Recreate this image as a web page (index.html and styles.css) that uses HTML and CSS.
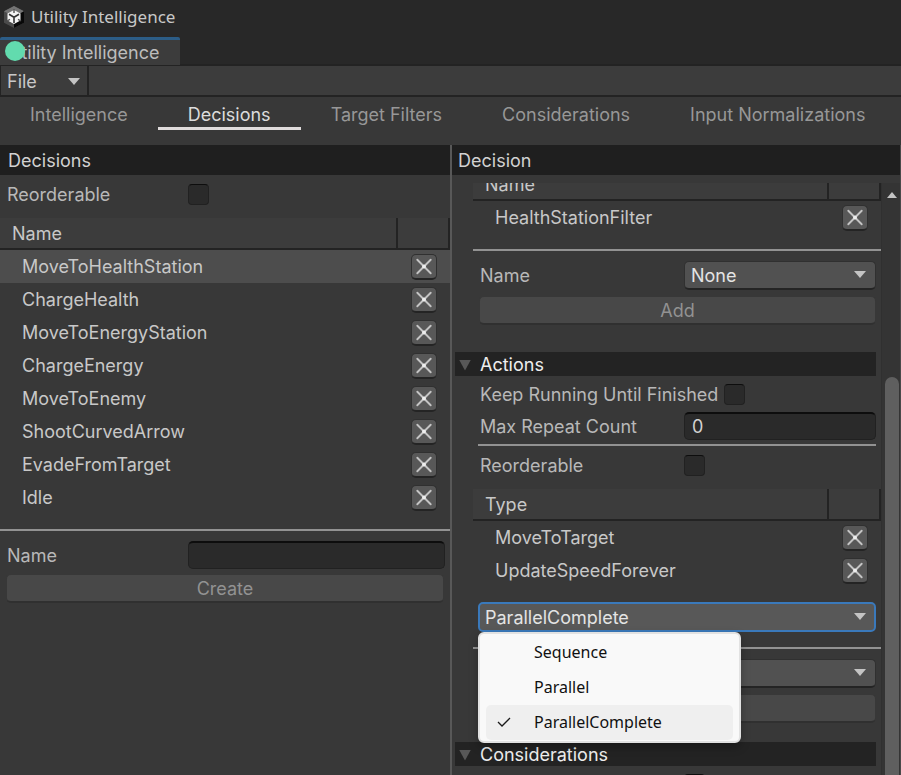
FILE: index.html
```html
<!DOCTYPE html>
<html lang="en">
<head>
<meta charset="utf-8">
<title>Utility Intelligence</title>
<link rel="stylesheet" href="styles.css">
</head>
<body>
<svg class="defs" aria-hidden="true">
  <symbol id="cross" viewBox="0 0 24 24"><path d="M5 5l14 14M19 5L5 19" stroke="#c4c4c4" stroke-width="2" stroke-linecap="round"/><circle cx="12" cy="12" r="2" fill="#eee"/></symbol>
</svg>
<header class="titlebar">
  <svg class="logo" viewBox="0 0 20 22" aria-hidden="true">
    <path d="M10 0l10 5.300v11.400L10 22 0 16.700V5.300z" fill="#4a4a4a"/>
    <path d="M10 0l10 5.300L10 11 0 5.300z" fill="#747474"/>
    <path d="M20 5.300v11.400L10 22V11z" fill="#080808"/>
    <path d="M10 4l6.500 3.500v7L10 18l-6.500-3.500v-7z" fill="#f4f4f4"/>
    <path d="M10 11.200V17M10 11.200L5 8.300M10 11.200l5-2.900" stroke="#333" stroke-width="1.600"/>
    <path d="M10 3v4M3 15l3-1.700M17 15l-3-1.700" stroke="#555" stroke-width="1.400"/>
  </svg>
  <span>Utility Intelligence</span>
</header>
<div class="dock"><div class="dock-tab">Utility Intelligence<span class="marker"></span></div></div>
<div class="toolbar"><button class="file" type="button">File<span class="arrow"></span></button></div>
<nav class="tabs">
  <button type="button">Intelligence</button>
  <button type="button" class="active">Decisions</button>
  <button type="button">Target Filters</button>
  <button type="button">Considerations</button>
  <button type="button">Input Normalizations</button>
</nav>
<main class="workspace">
  <section class="pane left">
    <h2>Decisions</h2>
    <div class="field reorder"><label for="r1">Reorderable</label><input type="checkbox" id="r1"></div>
    <table>
      <thead><tr><th>Name</th><th class="act"></th></tr></thead>
      <tbody>
        <tr class="selected"><td>MoveToHealthStation</td><td><button type="button" class="remove" aria-label="Remove"><svg><use href="#cross"/></svg></button></td></tr>
        <tr><td>ChargeHealth</td><td><button type="button" class="remove" aria-label="Remove"><svg><use href="#cross"/></svg></button></td></tr>
        <tr><td>MoveToEnergyStation</td><td><button type="button" class="remove" aria-label="Remove"><svg><use href="#cross"/></svg></button></td></tr>
        <tr><td>ChargeEnergy</td><td><button type="button" class="remove" aria-label="Remove"><svg><use href="#cross"/></svg></button></td></tr>
        <tr><td>MoveToEnemy</td><td><button type="button" class="remove" aria-label="Remove"><svg><use href="#cross"/></svg></button></td></tr>
        <tr><td>ShootCurvedArrow</td><td><button type="button" class="remove" aria-label="Remove"><svg><use href="#cross"/></svg></button></td></tr>
        <tr><td>EvadeFromTarget</td><td><button type="button" class="remove" aria-label="Remove"><svg><use href="#cross"/></svg></button></td></tr>
        <tr><td>Idle</td><td><button type="button" class="remove" aria-label="Remove"><svg><use href="#cross"/></svg></button></td></tr>
      </tbody>
    </table>
    <hr>
    <div class="field"><label for="n1">Name</label><input type="text" id="n1"></div>
    <button type="button" class="wide" disabled>Create</button>
  </section>
  <section class="pane right">
    <h2>Decision</h2>
    <div class="scroll">
      <div class="content">
        <table class="filters">
          <thead><tr><th>Name</th><th class="act"></th></tr></thead>
          <tbody><tr><td>HealthStationFilter</td><td><button type="button" class="remove" aria-label="Remove"><svg><use href="#cross"/></svg></button></td></tr></tbody>
        </table>
        <hr>
        <div class="field"><label for="n2">Name</label><span class="pick"><select id="n2"><option>None</option></select></span></div>
        <button type="button" class="wide" disabled>Add</button>
        <h3>Actions</h3>
        <div class="field keep"><label for="k">Keep Running Until Finished</label><input type="checkbox" id="k"></div>
        <div class="field"><label for="m">Max Repeat Count</label><input type="text" id="m" value="0"></div>
        <hr class="short">
        <div class="field reorder"><label for="r2">Reorderable</label><input type="checkbox" id="r2"></div>
        <table>
          <thead><tr><th>Type</th><th class="act"></th></tr></thead>
          <tbody>
            <tr><td>MoveToTarget</td><td><button type="button" class="remove" aria-label="Remove"><svg><use href="#cross"/></svg></button></td></tr>
            <tr><td>UpdateSpeedForever</td><td><button type="button" class="remove" aria-label="Remove"><svg><use href="#cross"/></svg></button></td></tr>
          </tbody>
        </table>
        <div class="mode">
          <span class="pick focus"><select aria-label="Execution mode"><option>ParallelComplete</option></select></span>
          <ul class="menu" role="listbox" aria-label="Execution mode">
            <li role="option">Sequence</li>
            <li role="option">Parallel</li>
            <li role="option" class="chosen" aria-selected="true"><svg viewBox="0 0 14 10" aria-hidden="true"><path d="M1 5l4 4 8-8" fill="none" stroke="#1a1a1a" stroke-width="1.300"/></svg>ParallelComplete</li>
          </ul>
        </div>
        <hr>
        <div class="field choice"><span class="pick"><select aria-label="Action type"><option></option></select></span></div>
        <button type="button" class="wide" aria-label="Add action" disabled></button>
        <h3 class="next">Considerations</h3>
        <div class="field choice last"><input type="checkbox" aria-label="Reorder considerations"></div>
      </div>
      <div class="scrollbar"><span class="up"></span><span class="thumb"></span></div>
    </div>
  </section>
</main>
</body>
</html>
```
FILE: styles.css
```css
* { box-sizing: border-box; }
body {
  margin: 0;
  height: 100vh;
  overflow: hidden;
  display: flex;
  flex-direction: column;
  background: #383838;
  color: #c8c8c8;
  font: 18px/24px Inter, "Liberation Sans", sans-serif;
}
button, input, select { font: inherit; color: inherit; margin: 0; border: 0; }
.defs { position: absolute; width: 0; height: 0; }

.titlebar {
  display: flex;
  align-items: center;
  gap: 7px;
  height: 37px;
  flex: none;
  padding: 0 4px 3px;
  background: #282828;
  font: 17px/24px "Noto Sans", sans-serif;
}
.logo { width: 20px; height: 22px; }
.dock { display: flex; flex: none; height: 29px; background: #282828; border-bottom: 2px solid #232323; }
.dock-tab {
  position: relative;
  padding: 1px 21px 0 8px;
  height: 28px;
  background: #3c3c3c;
  border-top: 3px solid #2c5d87;
  border-radius: 2px 2px 0 0;
  line-height: 23px;
  color: #bdbdbd;
}
.marker { position: absolute; left: 5px; top: 1px; width: 20px; height: 20px; border-radius: 50%; background: #62dbae; }
.toolbar { display: flex; flex: none; height: 31px; background: #3c3c3c; border-bottom: 2px solid #232323; }
.file {
  display: flex;
  align-items: center;
  justify-content: space-between;
  width: 89px;
  padding: 2px 7px 0 6px;
  background: none;
  border-left: 1px solid #232323;
  border-right: 2px solid #232323;
}
.arrow { width: 12px; height: 7px; background: #c4c4c4; clip-path: polygon(0 0, 100% 0, 50% 100%); }
.tabs { display: flex; flex: none; height: 48px; align-items: flex-start; }
.tabs button { height: 33px; padding: 5px 30px 0; background: none; color: #979797; border-bottom: 3px solid transparent; white-space: nowrap; }
.tabs .active { color: #dcdcdc; border-color: #e0dcdc; }

.workspace { display: flex; flex: 1; min-height: 0; border-right: 1px solid #4a4a4a; }
.pane { min-width: 0; display: flex; flex-direction: column; }
.left { flex: 0 0 50%; }
.right { flex: 1; border-left: 2px solid #585858; }
h2 { margin: 0; flex: none; padding: 4px 8px 2px; height: 30px; background: #1f1f1f; color: #d2d2d2; font: inherit; line-height: 24px; }
.right h2 { padding-left: 6px; }

.field { display: grid; grid-template-columns: 181px 1fr; align-items: center; min-height: 28px; padding: 0 5px 0 7px; color: #b8b8b8; }
.field.reorder { min-height: 21px; margin: 9px 0 13px; }
.field label { line-height: 21px; white-space: nowrap; }
input[type="checkbox"] {
  appearance: none;
  width: 21px;
  height: 21px;
  background: #2a2a2a;
  border: 1px solid #212121;
  border-top-color: #0d0d0d;
  border-radius: 4px;
}
input[type="text"] {
  width: 100%;
  min-width: 0;
  height: 28px;
  padding: 0 7px;
  background: #2a2a2a;
  border: 1px solid #212121;
  border-top: 2px solid #0d0d0d;
  border-radius: 5px;
  color: #d2d2d2;
}

table { width: 100%; flex: none; table-layout: fixed; border-collapse: separate; border-spacing: 0; }
th {
  height: 32px;
  padding: 2px 12px 0;
  text-align: left;
  font-weight: 400;
  background: #3c3c3c;
  border-bottom: 2px solid #232323;
  border-right: 2px solid #232323;
}
th.act { width: 52px; }
td { height: 33px; padding: 1px 0 0 22px; }
td + td { padding: 0 0 0 13px; }
.selected { background: #4d4d4d; }
.remove {
  display: block;
  width: 26px;
  height: 26px;
  padding: 0;
  background: #585858;
  border: 1px solid #303030;
  border-bottom: 2px solid #242424;
  border-radius: 5px;
}
.remove svg { display: block; width: 24px; height: 23px; }
hr { width: 100%; height: 2px; flex: none; margin: 15px 0 10px; border: 0; background: #929292; }
.wide {
  height: 29px;
  margin: 5px 6px 0;
  padding: 2px 0 0;
  background: #484848;
  border: 1px solid #383838;
  border-bottom: 2px solid #303030;
  border-radius: 5px;
  color: #929292;
}

.scroll { display: flex; flex: 1; min-height: 0; margin-top: 8px; overflow: hidden; }
.content { flex: 1; min-width: 0; margin-top: -14px; padding-left: 21px; }
.content .field { grid-template-columns: 204px 1fr; }
.content .choice > * { grid-column: 2; }
.content .wide { display: block; width: calc(100% - 11px); margin: 6px 5px 0 6px; }
.pick { position: relative; display: block; }
.pick::after {
  content: "";
  position: absolute;
  right: 10px;
  top: 10px;
  width: 12px;
  height: 7px;
  background: #c4c4c4;
  clip-path: polygon(0 0, 100% 0, 50% 100%);
  pointer-events: none;
}
select {
  appearance: none;
  display: block;
  width: 100%;
  height: 29px;
  padding: 1px 6px 0;
  background: #515151;
  border: 1px solid #303030;
  border-bottom: 2px solid #242424;
  border-radius: 5px;
  color: #e4e4e4;
}
h3 {
  display: flex;
  align-items: center;
  margin: 27px 5px 0 -18px;
  height: 24px;
  padding: 2px 0 0 4px;
  gap: 9px;
  background: #232323;
  font: inherit;
  color: #eee;
}
h3::before { content: ""; width: 12px; height: 11px; background: #585858; clip-path: polygon(0 0, 100% 0, 50% 100%); }
.content .keep { grid-template-columns: 244px 1fr; min-height: 36px; }
.content .short { width: auto; margin: 4px 5px 0; }
.mode { position: relative; margin: 15px 5px 0; }
.focus select { height: 30px; background: #585858; border: 2px solid #3a79bb; padding: 1px 5px 0; }
.focus::after { top: 11px; }
.menu {
  position: absolute;
  z-index: 2;
  left: 0;
  top: 30px;
  width: 263px;
  margin: 0;
  padding: 1px 6px;
  list-style: none;
  background: #f9f9f9;
  border: 2px solid #e2e2e2;
  border-radius: 6px;
  box-shadow: 0 4px 10px #0004;
  color: #111;
  font: 16px/35px "Noto Sans", sans-serif;
}
.menu li { position: relative; height: 35px; padding-left: 48px; border-radius: 5px; }
.menu .chosen { background: #efefef; }
.menu svg { position: absolute; left: 11px; top: 12px; width: 14px; height: 10px; }
h3.next { margin-top: 19px; }
.content .last { min-height: 36px; }
.scrollbar { flex: 0 0 19px; display: flex; flex-direction: column; align-items: center; padding-left: 2px; background: #343434; border-left: 1px solid #303030; }
.up { width: 10px; height: 6px; margin-top: 9px; background: #c4c4c4; clip-path: polygon(50% 0, 100% 100%, 0 100%); }
.thumb { flex: 1; width: 14px; margin-top: 179px; background: #5f5f5f; border-radius: 7px 7px 0 0; }
```
